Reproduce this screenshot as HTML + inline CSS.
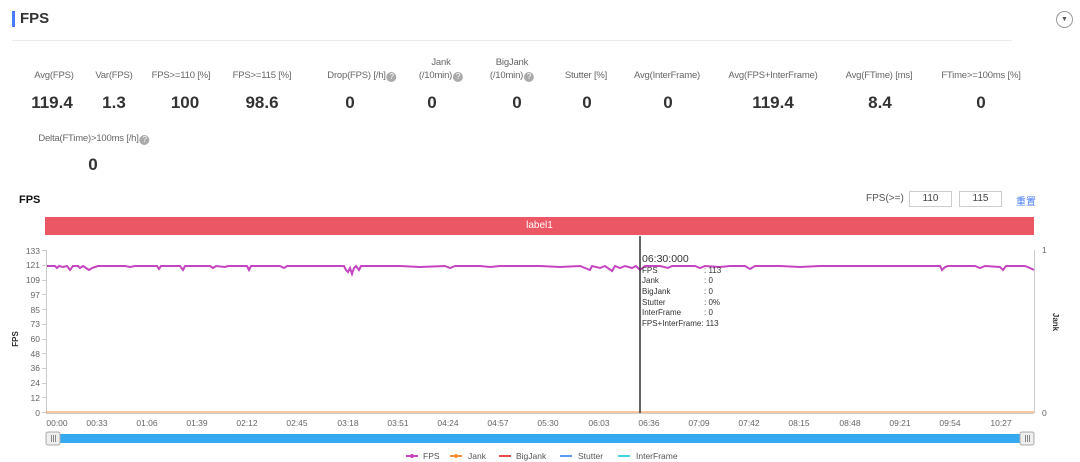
<!DOCTYPE html>
<html><head><meta charset="utf-8">
<style>
*{margin:0;padding:0;box-sizing:border-box}
body{width:1080px;height:462px;background:#fff;font-family:"Liberation Sans","Noto Sans CJK SC",sans-serif;position:relative;overflow:hidden;color:#333}
.a{position:absolute;white-space:nowrap}
.lab{font-size:9.5px;letter-spacing:-0.2px;color:#666;text-align:center;transform:translateX(-50%);line-height:13px}
.val{font-size:17px;font-weight:bold;color:#333;transform:translateX(-50%)}
.q{display:inline-block;width:10px;height:10px;border-radius:50%;background:#aaa;color:#fff;font-size:8px;line-height:10px;text-align:center;vertical-align:-1px;margin-left:1px;letter-spacing:0}
</style></head><body>
<div class="a" style="left:12px;top:11px;width:3px;height:16px;background:#4a7cf7"></div>
<div class="a" style="left:20px;top:10px;font-size:15px;font-weight:bold;color:#333">FPS</div>
<div class="a" style="left:1056px;top:11px;width:17px;height:17px;border:1px solid #999;border-radius:50%;font-size:7px;line-height:15px;text-align:center;color:#555">▼</div>
<div class="a" style="left:12px;top:40px;width:1000px;height:1px;background:#eaeaea"></div>

<div class="a lab" style="left:54px;top:69px">Avg(FPS)</div>
<div class="a lab" style="left:114px;top:69px">Var(FPS)</div>
<div class="a lab" style="left:181px;top:69px">FPS&gt;=110 [%]</div>
<div class="a lab" style="left:262px;top:69px">FPS&gt;=115 [%]</div>
<div class="a lab" style="left:362px;top:69px">Drop(FPS) [/h]<span class="q">?</span></div>
<div class="a lab" style="left:441px;top:56px">Jank<br>(/10min)<span class="q">?</span></div>
<div class="a lab" style="left:512px;top:56px">BigJank<br>(/10min)<span class="q">?</span></div>
<div class="a lab" style="left:586px;top:69px">Stutter [%]</div>
<div class="a lab" style="left:667px;top:69px">Avg(InterFrame)</div>
<div class="a lab" style="left:773px;top:69px">Avg(FPS+InterFrame)</div>
<div class="a lab" style="left:879px;top:69px">Avg(FTime) [ms]</div>
<div class="a lab" style="left:981px;top:69px">FTime&gt;=100ms [%]</div>

<div class="a val" style="left:52px;top:93px">119.4</div>
<div class="a val" style="left:114px;top:93px">1.3</div>
<div class="a val" style="left:185px;top:93px">100</div>
<div class="a val" style="left:262px;top:93px">98.6</div>
<div class="a val" style="left:350px;top:93px">0</div>
<div class="a val" style="left:432px;top:93px">0</div>
<div class="a val" style="left:517px;top:93px">0</div>
<div class="a val" style="left:587px;top:93px">0</div>
<div class="a val" style="left:668px;top:93px">0</div>
<div class="a val" style="left:773px;top:93px">119.4</div>
<div class="a val" style="left:880px;top:93px">8.4</div>
<div class="a val" style="left:981px;top:93px">0</div>

<div class="a lab" style="left:94px;top:132px">Delta(FTime)&gt;100ms [/h]<span class="q">?</span></div>
<div class="a val" style="left:93px;top:155px">0</div>

<div class="a" style="left:19px;top:194px;font-size:11px;font-weight:bold;color:#111">FPS</div>
<div class="a" style="left:866px;top:193px;font-size:10px;color:#555">FPS(&gt;=)</div>
<div class="a" style="left:909px;top:191px;width:43px;height:16px;border:1px solid #ccc;font-size:10px;text-align:center;line-height:14px;color:#444">110</div>
<div class="a" style="left:959px;top:191px;width:43px;height:16px;border:1px solid #ccc;font-size:10px;text-align:center;line-height:14px;color:#444">115</div>
<div class="a" style="left:1016px;top:193px;font-size:10px;color:#4a7cf7">重置</div>

<div class="a" style="left:45px;top:217px;width:989px;height:18px;background:#ec5766;color:#fff;font-size:10px;text-align:center;line-height:18px">label1</div>

<svg class="a" style="left:0;top:0" width="1080" height="462" font-family="Liberation Sans, sans-serif">
<g stroke="#ccc" stroke-width="1">
<line x1="46.5" y1="250" x2="46.5" y2="413"/>
<line x1="1034.5" y1="250" x2="1034.5" y2="413"/>
<line x1="46" y1="413.5" x2="1034" y2="413.5"/>
</g>
<g font-size="8.5" fill="#666" text-anchor="end">
<text x="40" y="254">133</text><text x="40" y="268">121</text><text x="40" y="283">109</text><text x="40" y="298">97</text><text x="40" y="313">85</text><text x="40" y="327">73</text><text x="40" y="342">60</text><text x="40" y="357">48</text><text x="40" y="371">36</text><text x="40" y="386">24</text><text x="40" y="401">12</text><text x="40" y="416">0</text>
</g>
<g stroke="#ccc"><line x1="42" y1="250.5" x2="46" y2="250.5"/><line x1="42" y1="265.5" x2="46" y2="265.5"/><line x1="42" y1="280.5" x2="46" y2="280.5"/><line x1="42" y1="294.5" x2="46" y2="294.5"/><line x1="42" y1="309.5" x2="46" y2="309.5"/><line x1="42" y1="324.5" x2="46" y2="324.5"/><line x1="42" y1="339.5" x2="46" y2="339.5"/><line x1="42" y1="353.5" x2="46" y2="353.5"/><line x1="42" y1="368.5" x2="46" y2="368.5"/><line x1="42" y1="383.5" x2="46" y2="383.5"/><line x1="42" y1="397.5" x2="46" y2="397.5"/><line x1="42" y1="412.5" x2="46" y2="412.5"/></g>
<text x="18" y="339" font-size="8" font-weight="bold" fill="#333" transform="rotate(-90 18 339)" text-anchor="middle">FPS</text>
<text x="1053" y="322" font-size="8" font-weight="bold" fill="#333" transform="rotate(90 1053 322)" text-anchor="middle">Jank</text>
<text x="1042" y="253" font-size="8.5" fill="#666">1</text>
<text x="1042" y="416" font-size="8.5" fill="#666">0</text>
<g font-size="8.5" fill="#666" text-anchor="middle">
<text x="57" y="426">00:00</text><text x="97" y="426">00:33</text><text x="147" y="426">01:06</text><text x="197" y="426">01:39</text><text x="247" y="426">02:12</text><text x="297" y="426">02:45</text><text x="348" y="426">03:18</text><text x="398" y="426">03:51</text><text x="448" y="426">04:24</text><text x="498" y="426">04:57</text><text x="548" y="426">05:30</text><text x="599" y="426">06:03</text><text x="649" y="426">06:36</text><text x="699" y="426">07:09</text><text x="749" y="426">07:42</text><text x="799" y="426">08:15</text><text x="850" y="426">08:48</text><text x="900" y="426">09:21</text><text x="950" y="426">09:54</text><text x="1001" y="426">10:27</text>
</g>
<line x1="46" y1="412" x2="1034" y2="412" stroke="#f0903a" stroke-width="1"/>
<polyline fill="none" stroke="#c545c0" stroke-width="2" points="47,266 55,266 57,268 59,266 63,267 67,266 70,270 73,266 78,266 80,268 83,266 86,268 89,270 92,268 95,267 98,266 125,266 130,267 135,266 157,266 159,269 161,266 180,266 183,270 185,266 210,266 213,268 216,266 225,267 228,266 247,266 249,270 251,266 280,266 284,268 287,266 300,266 344,266 346,270 348,272 350,268 352,274 354,268 356,266 359,270 361,266 400,266 420,267 445,266 450,268 455,266 480,266 490,267 500,266 540,266 560,267 580,266 590,270 592,266 600,268 605,266 612,271 615,266 620,268 625,266 632,268 636,266 640,270 645,266 660,266 668,268 672,266 695,266 700,268 705,266 720,267 730,266 745,266 750,269 755,266 780,266 800,267 820,266 860,266 880,266 910,266 940,266 942,270 945,267 948,266 975,266 980,268 985,266 1000,267 1003,270 1006,266 1025,266 1030,268 1034,270"/>
<line x1="640" y1="236" x2="640" y2="413" stroke="#333" stroke-width="1.5"/>
<text x="642" y="262" font-size="10.5" fill="#333">06:30:000</text>
<g font-size="8" fill="#333">
<text x="642" y="273">FPS</text><text x="704" y="273">: 113</text>
<text x="642" y="283">Jank</text><text x="704" y="283">: 0</text>
<text x="642" y="294">BigJank</text><text x="704" y="294">: 0</text>
<text x="642" y="305">Stutter</text><text x="704" y="305">: 0%</text>
<text x="642" y="315">InterFrame</text><text x="704" y="315">: 0</text>
<text x="642" y="326">FPS+InterFrame: 113</text>
</g>
<rect x="46" y="434" width="988" height="9" fill="#35aaf0"/>
<rect x="46" y="432" width="14" height="13" rx="2" fill="#eee" stroke="#aaa"/>
<rect x="1020" y="432" width="14" height="13" rx="2" fill="#eee" stroke="#aaa"/>
<g stroke="#888"><line x1="51.5" y1="435" x2="51.5" y2="442"/><line x1="53.5" y1="435" x2="53.5" y2="442"/><line x1="55.5" y1="435" x2="55.5" y2="442"/><line x1="1025.5" y1="435" x2="1025.5" y2="442"/><line x1="1027.5" y1="435" x2="1027.5" y2="442"/><line x1="1029.5" y1="435" x2="1029.5" y2="442"/></g>
<g font-size="8.5" fill="#555" stroke-width="2">
<line x1="406" y1="456" x2="418" y2="456" stroke="#c545c0"/><circle cx="412" cy="456" r="2" fill="#c545c0"/><text x="423" y="459">FPS</text>
<line x1="450" y1="456" x2="462" y2="456" stroke="#f0903a"/><circle cx="456" cy="456" r="2" fill="#f0903a"/><text x="468" y="459">Jank</text>
<line x1="499" y1="456" x2="511" y2="456" stroke="#e84a4a"/><text x="516" y="459">BigJank</text>
<line x1="560" y1="456" x2="572" y2="456" stroke="#5b9cf0"/><text x="578" y="459">Stutter</text>
<line x1="618" y1="456" x2="630" y2="456" stroke="#3ed6e8"/><text x="636" y="459">InterFrame</text>
</g>
</svg>
</body></html>
